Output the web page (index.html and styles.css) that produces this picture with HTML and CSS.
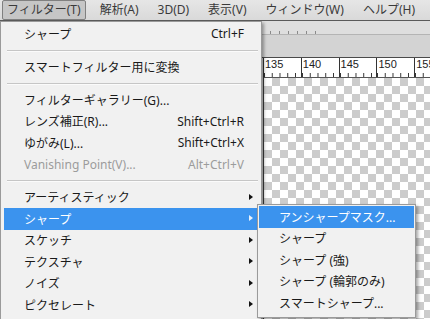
FILE: index.html
```html
<!DOCTYPE html>
<html lang="ja">
<head>
  <meta charset="UTF-8">
  <title>フィルター</title>
  <link rel="stylesheet" href="styles.css">
</head>
<body>

<div class="menubar">
  <span class="mb-item open">フィルター(T)</span>
  <span class="mb-item">解析(A)</span>
  <span class="mb-item">3D(D)</span>
  <span class="mb-item">表示(V)</span>
  <span class="mb-item">ウィンドウ(W)</span>
  <span class="mb-item">ヘルプ(H)</span>
</div>

<div class="workspace">
  <div class="optbar"></div>
  <div class="optbar2"></div>
  <div class="docarea">
    <div class="ruler">
      <span class="mark">135</span>
      <span class="mark">140</span>
      <span class="mark">145</span>
      <span class="mark">150</span>
      <span class="mark">155</span>
    </div>
    <div class="canvas"></div>
  </div>

  <!-- filter menu -->
  <div class="menu main">
    <div class="item"><span class="label">シャープ</span><span class="key">Ctrl+F</span><span class="arrow"></span></div>
    <div class="sep"></div>
    <div class="item"><span class="label">スマートフィルター用に変換</span><span class="arrow"></span></div>
    <div class="sep"></div>
    <div class="item"><span class="label">フィルターギャラリー(G)...</span><span class="arrow"></span></div>
    <div class="item"><span class="label">レンズ補正(R)...</span><span class="key">Shift+Ctrl+R</span><span class="arrow"></span></div>
    <div class="item"><span class="label">ゆがみ(L)...</span><span class="key">Shift+Ctrl+X</span><span class="arrow"></span></div>
    <div class="item disabled"><span class="label">Vanishing Point(V)...</span><span class="key">Alt+Ctrl+V</span><span class="arrow"></span></div>
    <div class="sep"></div>
    <div class="item"><span class="label">アーティスティック</span><span class="arrow more"></span></div>
    <div class="item active"><span class="label">シャープ</span><span class="arrow more"></span></div>
    <div class="item"><span class="label">スケッチ</span><span class="arrow more"></span></div>
    <div class="item"><span class="label">テクスチャ</span><span class="arrow more"></span></div>
    <div class="item"><span class="label">ノイズ</span><span class="arrow more"></span></div>
    <div class="item"><span class="label">ピクセレート</span><span class="arrow more"></span></div>
  </div>

  <!-- sharpen submenu -->
  <div class="menu sub">
    <div class="item active"><span class="label">アンシャープマスク...</span></div>
    <div class="item"><span class="label">シャープ</span></div>
    <div class="item"><span class="label">シャープ (強)</span></div>
    <div class="item"><span class="label">シャープ (輪郭のみ)</span></div>
    <div class="item"><span class="label">スマートシャープ...</span></div>
  </div>
</div>

</body>
</html>
```

FILE: styles.css
```css
body {
  margin: 0;
  width: 430px;
  height: 319px;
  overflow: hidden;
  font-family: "Noto Sans", "Noto Sans CJK JP", sans-serif;
  font-size: 12px;
  color: #1a1a1a;
  background: #d4d4d4;
}
.menubar {
  height: 20px;
  display: flex;
  align-items: center;
  gap: 9px;
  padding-left: 2px;
  background: linear-gradient(#e6e6e6, #d9d9d9);
  box-sizing: border-box;
}
.mb-item {
  height: 18px;
  line-height: 18px;
  padding: 0 4px;
  color: #3a3a3a;
  border: 1px solid transparent;
  border-radius: 2px;
}
.mb-item.open {
  background: #c6c6c6;
  border-color: #808080;
}
.workspace {
  position: relative;
  height: 299px;
  overflow: hidden;
  border-top: 1px solid #5a5a5a;
  box-sizing: border-box;
}
.optbar {
  height: 13px;
  position: relative;
  background-color: #dedede;
  border-bottom: 1px solid #b4b4b4;
}
/* faint ticks of the panel strip */
.optbar::after {
  content: "";
  position: absolute;
  left: 270px;
  bottom: 0;
  width: 50px;
  height: 3px;
  background-image: linear-gradient(to right, #8a8a8a 1px, transparent 1px);
  background-size: 9px 3px;
}
.optbar2 {
  height: 22px;
  background: #d3d3d3;
  border-bottom: 1px solid #4a4a4a;
}
.docarea {
  margin-left: 263px;
  border-left: 1px solid #3c3c3c;
  height: 262px;
  display: flex;
  flex-direction: column;
}
.ruler {
  height: 19px;
  display: flex;
  background: #fff;
  border-bottom: 1px solid #555;
  flex-shrink: 0;
}
.mark {
  width: 38.8px;
  flex-shrink: 0;
  box-sizing: border-box;
  border-left: 1px solid #333;
  margin-left: -1px;
  font-family: "Liberation Sans", sans-serif;
  font-size: 11px;
  line-height: 12px;
  padding-left: 1px;
  color: #222;
  background-image: linear-gradient(to right, #333 1px, transparent 1px);
  background-size: 7.76px 4px;
  background-repeat: repeat-x;
  background-position: left bottom;
}
.canvas {
  flex: 1;
  background: repeating-conic-gradient(#cccccc 0 25%, #ffffff 0 50%) 0 0 / 16px 16px;
}

/* menus */
.menu {
  position: absolute;
  background: #f1f1f1;
  border: 1px solid #9a9a9a;
  box-sizing: border-box;
  box-shadow: 2px 2px 3px rgba(0, 0, 0, 0.35);
}
.menu.main {
  top: 0;
  left: 0;
  width: 262px;
  height: 310px;
  padding-top: 1px;
}
.menu.sub {
  top: 183px;
  left: 257px;
  width: 159px;
  padding: 1px 1px 3px;
}
.item {
  height: 21.5px;
  display: flex;
  align-items: center;
  white-space: nowrap;
}
.main .item {
  margin-left: 3px;
  padding-left: 20px;
}
.sub .item {
  padding-left: 20px;
}
.item.active {
  background: #3b93ee;
  color: #fff;
}
.item.disabled {
  color: #9c9c9c;
}
.key {
  margin-left: auto;
}
.arrow {
  width: 17px;
  flex-shrink: 0;
  align-self: stretch;
  position: relative;
}
.main .item .label + .arrow {
  margin-left: auto;
}
.arrow.more::after {
  content: "";
  position: absolute;
  left: 5px;
  top: 7px;
  border-left: 4px solid #111;
  border-top: 3.5px solid transparent;
  border-bottom: 3.5px solid transparent;
}
.item.active .arrow.more::after {
  border-left-color: #e8f2fc;
}
.sep {
  height: 11.5px;
  position: relative;
}
.sep::after {
  content: "";
  position: absolute;
  left: 6px;
  right: 3px;
  top: 5px;
  border-top: 1px solid #c6c6c6;
  border-bottom: 1px solid #fbfbfb;
}
```
